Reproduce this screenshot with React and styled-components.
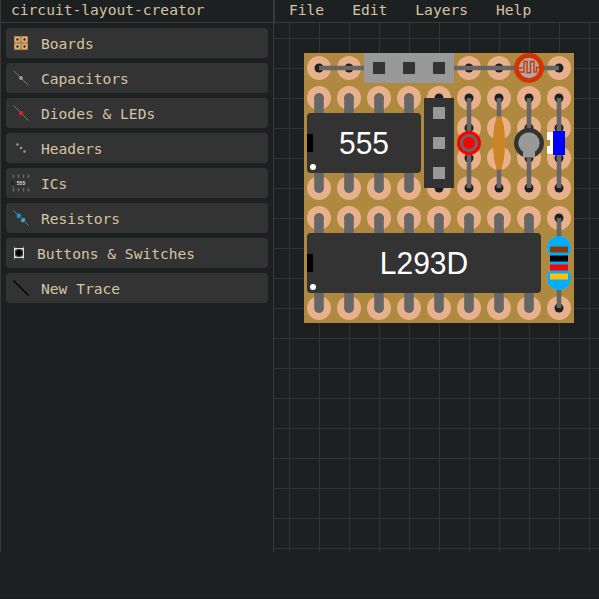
import React from "react";
import styled, { createGlobalStyle } from "styled-components";

const GlobalStyle = createGlobalStyle`
  * { box-sizing: border-box; }
  html, body { margin: 0; height: 100%; background: #1d2021; overflow: hidden; }
`;

const Page = styled.div`
  width: 599px;
  height: 599px;
  border-bottom: 1px solid #181b1c;
  color: #d5c4a1;
  font-family: "DejaVu Sans Mono", monospace;
  font-size: 14.6px;
`;

const Workspace = styled.div`
  display: grid;
  grid-template-columns: 273px 1fr;
  grid-template-rows: 23px 1fr;
  height: 552px;
  border-left: 1px solid #3c3836;
`;

const Title = styled.header`
  padding-left: 10px;
  line-height: 20px;
  white-space: nowrap;
  border-right: 1px solid #3c3836;
  border-bottom: 1px solid #3c3836;
`;

const MenuBar = styled.nav`
  display: flex;
  gap: 28px;
  padding-left: 14px;
  line-height: 20px;
  border-left: 1px solid #3c3836;
  border-bottom: 1px solid #3c3836;
`;

const MenuItem = styled.span`
  white-space: nowrap;
`;

const Sidebar = styled.aside`
  display: flex;
  flex-direction: column;
  gap: 5px;
  padding: 5px 5px 0;
  border-right: 1px solid #3c3836;
`;

const Category = styled.div`
  display: flex;
  align-items: center;
  gap: 11px;
  height: 30px;
  padding-left: 6px;
  border-radius: 4px;
  background: #333;
  white-space: nowrap;
`;

const CategoryIcon = styled.svg`
  flex: none;
  width: ${(p) => p.$width || 18}px;
  height: 18px;
`;

const Canvas = styled.main`
  padding: 30px 0 0 30px;
  background-image:
    linear-gradient(to right, #333 1px, transparent 1px),
    linear-gradient(to bottom, #333 1px, transparent 1px);
  background-size: 30px 30px;
  background-position: 15px 15px;
`;

const Drawing = styled.svg`
  display: block;
  width: 270px;
  height: 270px;
`;

const ChipLabel = styled.text`
  font-family: "Liberation Sans", Arial, sans-serif;
  font-size: 30.5px;
  fill: #fff;
  text-anchor: middle;
`;

const at = (n) => 15 + n * 30;
const range = (n) => Array.from({ length: n }, (_, i) => i);

const Wire = ({ x1, y1, x2, y2 }) => (
  <line x1={x1} y1={y1} x2={x2} y2={y2} stroke="#666" strokeWidth="4.6" />
);

const Chip = ({ y, pins, label }) => (
  <g>
    {range(pins).map((i) => (
      <line key={i} x1={at(i)} x2={at(i)} y1={y} y2={y + 90} stroke="#666" strokeWidth="9.6" strokeLinecap="round" />
    ))}
    <rect x="3" y={y + 15} width={pins * 30 - 6} height="60" rx="4" fill="#333" />
    <rect x="3" y={y + 36} width="6" height="18" fill="#000" />
    <circle cx="9" cy={y + 69} r="3" fill="#fff" />
    <ChipLabel x={pins * 15} y={y + 55.8} textLength={label.length === 3 ? 50 : 88.5} lengthAdjust="spacingAndGlyphs">
      {label}
    </ChipLabel>
  </g>
);

const Photoresistor = () => (
  <g>
    <circle cx="225" cy="15" r="12.6" fill="#aaa" stroke="#d63200" strokeWidth="4.8" />
    <path
      d="M215 15H218.5M215 19H220V8.5H223V19.8H226.5V8.5H230V19H232.5V14.5H236"
      fill="none"
      stroke="#d63200"
      strokeWidth="1.4"
    />
  </g>
);

const Circuit = () => (
  <Drawing viewBox="0 0 270 270">
    <rect width="270" height="270" fill="#af8940" />
    {range(9).map((r) =>
      range(9).map((c) => (
        <g key={`${r}-${c}`}>
          <circle cx={at(c)} cy={at(r)} r="12" fill="#e8b18b" />
          <circle cx={at(c)} cy={at(r)} r="4.5" fill="#1d2021" />
        </g>
      ))
    )}
    <Chip y={45} pins={4} label="555" />
    <Chip y={165} pins={8} label="L293D" />
    <Wire x1={15} y1={15} x2={60} y2={15} />
    <Wire x1={150} y1={15} x2={255} y2={15} />
    <rect x="60" width="90" height="30" fill="#999" />
    {[69, 99, 129].map((x) => <rect key={x} x={x} y="9" width="12" height="12" fill="#333" />)}
    <Photoresistor />
    <rect x="120" y="45" width="30" height="90" fill="#333" />
    {[54, 84, 114].map((y) => <rect key={y} x="129" y={y} width="12" height="12" fill="#999" />)}
    {[165, 195, 225, 255].map((x) => <Wire key={x} x1={x} y1={45} x2={x} y2={135} />)}
    <circle cx="165" cy="90" r="12" fill="#f00" />
    <circle cx="165" cy="90" r="7.5" fill="#f00" stroke="#666" strokeWidth="3" />
    <ellipse cx="195" cy="90" rx="6" ry="27" fill="#cc8424" />
    <circle cx="225" cy="90" r="15" fill="#333" />
    <circle cx="225" cy="90" r="10.6" fill="#999" />
    <rect x="219" y="92" width="12" height="12.5" fill="#999" />
    <path d="M243 79H249V100.7H243V92.7H246V87H243Z" fill="#fff" />
    <rect x="243" y="87" width="3" height="5.7" fill="#af8940" />
    <rect x="249" y="78" width="12" height="24" fill="#00f" />
    <Wire x1={255} y1={165} x2={255} y2={255} />
    <circle cx="255" cy="195" r="12" fill="#00aff5" />
    <circle cx="255" cy="225" r="12" fill="#00aff5" />
    <rect x="246" y="195" width="18" height="30" fill="#00aff5" />
    {["#8b3a0e", "#000", "#f00", "#ffc107"].map((color, i) => (
      <rect key={color} x="246" y={193.5 + i * 9} width="18" height="6" fill={color} />
    ))}
  </Drawing>
);

const Lead = ({ color = "#777", width = 1 }) => (
  <path d="M1.5 1.5L16.5 16.5" stroke={color} strokeWidth={width} />
);

const CATEGORIES = [
  {
    name: "Boards",
    icon: (
      <>
        <rect x="2" y="2" width="14" height="14" fill="#af8940" />
        {[5.5, 12.5].map((x) => [5.5, 12.5].map((y) => (
          <circle key={`${x}${y}`} cx={x} cy={y} r="2" fill="#1d2021" stroke="#e8b18b" strokeWidth="1.6" />
        )))}
      </>
    ),
  },
  { name: "Capacitors", icon: <><Lead /><circle cx="9" cy="9" r="2" fill="#999" /></> },
  { name: "Diodes & LEDs", icon: <><Lead /><circle cx="9" cy="9" r="2.2" fill="#d42020" /></> },
  {
    name: "Headers",
    icon: [5.5, 9, 12.5].map((n) => <circle key={n} cx={n} cy={n} r="1.2" fill="#999" />),
  },
  {
    name: "ICs",
    icon: (
      <>
        <path d="M1.5 .5V4M6.5 .5V4M11.5 .5V4M16.5 .5V4M1.5 14V17.5M6.5 14V17.5M11.5 14V17.5M16.5 14V17.5" stroke="#6c6c6c" strokeWidth="1.4" />
        <rect y="7.5" width="1" height="3" fill="#000" />
        <circle cx="1" cy="12.5" r=".6" fill="#999" />
        <text x="9" y="11" fontSize="5" fontWeight="bold" textAnchor="middle" fontFamily="Liberation Sans" fill="#ddd">555</text>
      </>
    ),
  },
  {
    name: "Resistors",
    icon: (
      <>
        <Lead />
        <circle cx="7" cy="7" r="2.4" fill="#109bd5" />
        <circle cx="11" cy="11" r="2.4" fill="#109bd5" />
        <path d="M6.4 8.6L8.6 6.4" stroke="#793b20" strokeWidth=".8" />
        <path d="M7.6 10.2L10.2 7.6" stroke="#111" />
        <path d="M9 11.2L11.2 9" stroke="#e23131" strokeWidth=".9" />
        <path d="M10.2 12.4L12.4 10.2" stroke="#ffc107" strokeWidth=".9" />
      </>
    ),
  },
  {
    name: "Buttons & Switches",
    width: 14,
    icon: (
      <>
        <path d="M2.5 2.5V15.5M11.5 2.5V15.5" stroke="#888" />
        <rect x="2.5" y="4.5" width="9" height="9" fill="#444" stroke="#ddd" />
        <circle cx="7" cy="9" r="3" fill="#000" />
        <path d="M3 6L5 4.5M11 6L9 4.5M3 12L5 13.5M11 12L9 13.5" stroke="#ddd" />
      </>
    ),
  },
  { name: "New Trace", icon: <Lead color="#000" width={1.2} /> },
];

export default function App() {
  return (
    <Page>
      <GlobalStyle />
      <Workspace>
        <Title>circuit-layout-creator</Title>
        <MenuBar>
          {["File", "Edit", "Layers", "Help"].map((m) => <MenuItem key={m}>{m}</MenuItem>)}
        </MenuBar>
        <Sidebar>
          {CATEGORIES.map(({ name, width, icon }) => (
            <Category key={name}>
              <CategoryIcon $width={width} viewBox={`0 0 ${width || 18} 18`}>{icon}</CategoryIcon>
              {name}
            </Category>
          ))}
        </Sidebar>
        <Canvas>
          <Circuit />
        </Canvas>
      </Workspace>
    </Page>
  );
}
